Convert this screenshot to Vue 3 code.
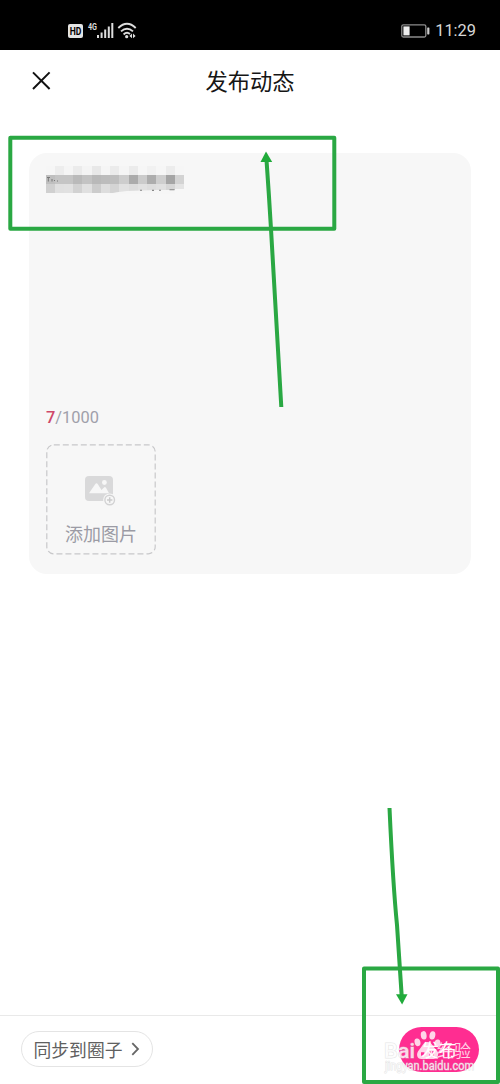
<script setup>
const edges = [46, 55, 64, 73.3, 82.4, 91.8, 100.8, 110, 119.2, 128.6, 137.8, 147, 156.4, 165.6, 175, 184]
const rows = [
  { y: 166, h: 9, tones: ['#f6f6f6', '#ededed', '#f5f5f5', '#ebebeb', '#f4f4f4', '#e8e8e8', '#f5f5f5', '#ebebeb', '#f5f5f5', '#ebebeb', '#f6f6f6', '#f1f1f1', '#f6f6f6', '#ececec', '#f6f6f6'] },
  { y: 175, h: 9, tones: ['#bfbfbf', '#c5c5c5', '#c5c5c5', '#bababa', '#c3c3c3', '#b9b9b9', '#bcbcbc', '#bebebe', '#cdcdcd', '#ababab', '#cbcbcb', '#adadad', '#cecece', '#a5a5a5', '#d3d3d3'] },
  { y: 184, h: 9, tones: ['#d0d0d0', '#e0e0e0', '#e1e1e1', '#d2d2d2', '#e0e0e0', '#cccccc', '#dddddd', '#d4d4d4', '#e1e1e1', '#dcdcdc', '#e1e1e1', '#dddddd', '#e0e0e0', '#d6d6d6', '#e4e4e4'] },
]
const cells = rows.flatMap((r) =>
  r.tones.map((fill, i) => ({ x: edges[i] - 46, y: r.y - 166, w: edges[i + 1] - edges[i], h: r.h, fill }))
)
</script>

<template>
  <div class="screen">
    <header class="status">
      <svg class="signals" width="70" height="20" viewBox="0 0 70 20">
        <rect x="0" y="4" width="15" height="14" rx="2" fill="#e4e4e4" />
        <text x="1.7" y="14.8" font-size="10" font-weight="700" textLength="11.6" lengthAdjust="spacingAndGlyphs" fill="#000">HD</text>
        <text x="20" y="9.5" font-size="8.5" font-weight="700" textLength="9" lengthAdjust="spacingAndGlyphs" fill="#ddd">4G</text>
        <g fill="#ddd">
          <rect x="29" y="15" width="2" height="3" />
          <rect x="32.6" y="12.5" width="2" height="5.5" />
          <rect x="36.2" y="9.5" width="2" height="8.5" />
          <rect x="39.8" y="6.5" width="2" height="11.5" />
          <rect x="43.3" y="3" width="2" height="15" />
        </g>
        <g fill="none" stroke="#ddd" stroke-width="1.9">
          <path d="M50.3 8 Q59 -0.3 67.7 8" />
          <path d="M53 11.4 Q59 5.9 65 11.4" />
          <path d="M55.6 14.5 Q58.8 11.3 62 14" />
        </g>
        <circle cx="58.7" cy="16.7" r="1.6" fill="#ddd" />
        <path d="M64 13.6v4.6l-2.6-2.3zM65 13.6v4.6l2.6-2.3z" fill="#ddd" />
      </svg>
      <div class="power">
        <svg width="29" height="14" viewBox="0 0 29 14">
          <rect x=".8" y=".8" width="24" height="12.2" rx="1.5" fill="none" stroke="#8c8c8c" stroke-width="1.3" />
          <rect x="2.4" y="2.4" width="6.2" height="9" fill="#eee" />
          <rect x="26.2" y="3.4" width="2.2" height="7" rx=".6" fill="#ccc" />
        </svg>
        <span class="clock">11:29</span>
      </div>
    </header>

    <nav class="title-bar">
      <svg class="close" width="20" height="20" viewBox="0 0 20 20">
        <path d="M2 1.4 18.6 18M18.6 1.4 2 18" stroke="#111" stroke-width="2" fill="none" />
      </svg>
      <h1>发布动态</h1>
    </nav>

    <main class="composer">
      <svg class="mosaic" width="140" height="28" viewBox="0 0 140 28">
        <rect v-for="(c, i) in cells" :key="i" :x="c.x" :y="c.y" :width="c.w" :height="c.h" :fill="c.fill" shape-rendering="crispEdges" />
        <path d="M129 27V28H62Q70 26 81 25Q96 24.5 112 24L129 24z" fill="#f6f6f6" />
        <path d="M129 18.5H139V28H129z" fill="#f7f7f7" />
        <rect x="129" y="18" width="9" height="5" fill="#e4e4e4" />
        <path d="M1 11.5h3M2.3 11.5v4M6 13v2.5M8 14.5h1M11 15h1" stroke="#777" stroke-width="1" />
        <path d="M94 24.3h2M106 24.4h2M113 24.2h2M123.5 23.8h5" stroke="#888" stroke-width="1.1" />
      </svg>
      <p class="count"><b>7</b><i>/</i>1000</p>
      <button class="upload">
        <svg class="frame" width="110" height="111" viewBox="0 0 110 111">
          <rect x=".8" y=".8" width="108.4" height="109" rx="7" fill="none" stroke="#c8c8ca" stroke-width="1.2" stroke-dasharray="6 3" />
        </svg>
        <svg class="picture" width="32" height="31" viewBox="0 0 32 31">
          <rect x="1" y="1" width="28" height="25" rx="4" fill="#d9d9da" />
          <path d="M5 18.2 11 9.5Q12.5 7 14 9.5L17.5 15 20 12.5Q21 11.6 22 12.8L25 18.2z" fill="#f7f7f7" />
          <circle cx="20.4" cy="7.5" r="2.4" fill="#f7f7f7" />
          <circle cx="25.7" cy="25" r="6.6" fill="#f7f7f7" />
          <circle cx="25.7" cy="25" r="4.8" fill="none" stroke="#d2d2d3" stroke-width="1.4" />
          <path d="M25.7 22.3v5.4M23 25h5.4" stroke="#cbcbcc" stroke-width="1.5" />
        </svg>
        <span>添加图片</span>
      </button>
    </main>

    <footer class="actions">
      <button class="sync">
        <span>同步到圈子</span>
        <svg width="9" height="14" viewBox="0 0 9 14"><path d="M1.3 1.2 7 7 1.3 12.8" fill="none" stroke="#666" stroke-width="1.8" /></svg>
      </button>
      <button class="publish">发布</button>
    </footer>

    <svg class="overlay" width="500" height="1084" viewBox="0 0 500 1084">
      <g fill="#fff" fill-opacity=".78" stroke="#cfcfcf" stroke-opacity=".55" stroke-width="1" paint-order="stroke">
        <text x="384" y="1058" font-size="20" font-weight="500" textLength="31" lengthAdjust="spacingAndGlyphs">Bai</text>
        <text x="437" y="1057" font-size="17" textLength="34" lengthAdjust="spacingAndGlyphs" stroke="none">经验</text>
        <text x="385" y="1070" font-size="12" textLength="89" lengthAdjust="spacingAndGlyphs">jingyan.baidu.com</text>
      </g>
      <g fill="#fff" fill-opacity=".8">
        <ellipse cx="423.7" cy="1035.3" rx="2.9" ry="4.2" transform="rotate(-8 423.7 1035.3)" />
        <ellipse cx="432.4" cy="1035.4" rx="2.9" ry="4.2" transform="rotate(12 432.4 1035.4)" />
        <ellipse cx="417.5" cy="1042.3" rx="2.9" ry="3.9" transform="rotate(-15 417.5 1042.3)" />
        <ellipse cx="437.3" cy="1043.3" rx="2.9" ry="3.9" transform="rotate(15 437.3 1043.3)" />
        <path fill-rule="evenodd" d="M427.5 1042C432 1042 433 1047 436.5 1050C440 1054 437.5 1059.5 433 1059H422C417 1059.5 415.5 1054 419 1050C422 1047 423 1042 427.5 1042zM421 1052.2v3.6h3.4v-3.6zM429.3 1051v5h4.2v-5h-1.2v3.8h-1.8v-3.8z" />
      </g>
      <g fill="none" stroke="#2aa843" stroke-width="4" stroke-linejoin="round">
        <rect x="10.3" y="137.8" width="324" height="91" />
        <rect x="364" y="968.5" width="134" height="113.5" />
        <path d="M266.5 160Q269 195 271 229L281.3 407" />
        <path d="M389.5 808Q393 885 397 925L401.7 996" />
      </g>
      <path d="M266 151.5 272.2 162 260.5 162z" fill="#20ab3a" />
      <path d="M402.1 1004.5 396 994.3 407.5 994.3z" fill="#20ab3a" />
    </svg>
  </div>
</template>

<style>
body { margin: 0; background: #fff; }
</style>

<style scoped>
.screen {
  position: relative;
  box-sizing: border-box;
  width: 500px;
  height: 1084px;
  overflow: hidden;
  display: flex;
  flex-direction: column;
  background: #fff;
  font-family: Roboto, "Noto Sans CJK SC", sans-serif;
}
button { padding: 0; border: 0; background: none; font: inherit; }
.status {
  height: 50px;
  flex: none;
  box-sizing: border-box;
  padding: 0 24px 0 68px;
  display: flex;
  align-items: flex-start;
  justify-content: space-between;
  background: #000;
}
.signals { margin-top: 20px; }
.power { display: flex; align-items: center; gap: 5px; margin-top: 20px; height: 22px; }
.clock { color: #d8d8d8; font-size: 16.4px; line-height: 22px; }
.title-bar {
  height: 62px;
  flex: none;
  display: grid;
  grid-template-columns: 20px 1fr 20px;
  align-items: center;
  padding: 0 31px;
}
h1 { margin: 2px 0 0; text-align: center; font-size: 22.3px; line-height: 32px; font-weight: 400; color: #151515; }
.composer {
  box-sizing: border-box;
  width: 442px;
  height: 421px;
  margin: 41px 0 0 29px;
  padding: 13px 17px 0;
  border-radius: 18px;
  background: #f7f7f7;
  display: flex;
  flex-direction: column;
  align-items: flex-start;
}
.mosaic { flex: none; }
.count { margin: 213px 0 0; font-size: 16.4px; line-height: 22px; color: #a0a0aa; }
.count b { color: #cf4769; font-weight: 500; }
.count i { font-style: normal; }
.upload {
  position: relative;
  width: 110px;
  height: 111px;
  margin-top: 15px;
  display: flex;
  flex-direction: column;
  align-items: center;
  color: #9b9ba5;
  font-size: 18px;
  line-height: 24px;
}
.frame { position: absolute; inset: 0; }
.picture { margin: 31px 0 0 -3px; flex: none; }
.upload span { margin-top: 17px; }
.actions {
  box-sizing: border-box;
  height: 69px;
  margin-top: auto;
  padding: 0 21px 2px;
  border-top: 1px solid #e9e9e9;
  display: flex;
  align-items: center;
  justify-content: space-between;
}
.sync {
  box-sizing: border-box;
  width: 132px;
  height: 36px;
  border: 1px solid #e4e4e4;
  border-radius: 18px;
  display: flex;
  align-items: center;
  justify-content: center;
  gap: 9px;
  color: #606060;
  font-size: 17.8px;
  line-height: 24px;
}
.sync span { margin-top: 3px; }
.publish {
  width: 80px;
  height: 45px;
  border-radius: 23px;
  background: #ff2d91;
  color: #fff;
  font-size: 17.8px;
}
.overlay { position: absolute; inset: 0; pointer-events: none; }
</style>
